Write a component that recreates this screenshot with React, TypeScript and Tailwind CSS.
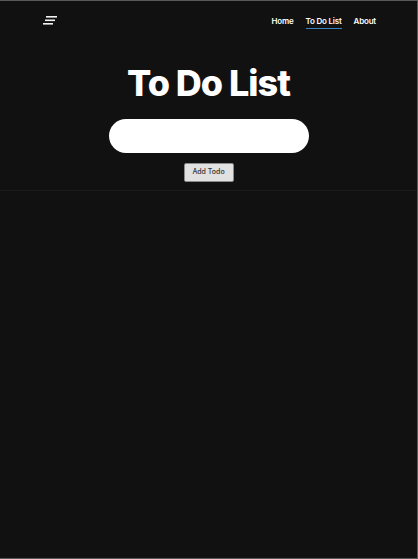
const App = () => {
  return (
    <div
      className="w-[418px] h-[559px] bg-[#111111] border-t border-r border-b border-[#5a5a5a] flex flex-col"
      style={{ fontFamily: "Inter, 'Noto Sans', sans-serif" }}
    >
      <header className="h-[190px] border-b border-[#1a1a1a] flex flex-col">
        <nav className="flex items-center justify-between pl-[43px] pr-[41px] pt-[14px] h-[25px]">
          <svg width="14" height="9" viewBox="0 0 14 9">
            <rect x="3" y="0" width="11" height="1.6" fill="#f2f2f2" />
            <rect x="2" y="3.5" width="10" height="1.6" fill="#f2f2f2" />
            <rect x="0" y="7" width="10" height="1.6" fill="#f2f2f2" />
          </svg>
          <ul className="flex items-center gap-[12px] text-[8px] font-semibold text-white tracking-[-0.2px]">
            <li>Home</li>
            <li className="relative">
              To Do List
              <span className="absolute left-0 right-0 -bottom-[2px] h-px bg-[#3b82c4]" />
            </li>
            <li>About</li>
          </ul>
        </nav>
        <h1 className="text-center text-white font-extrabold text-[36px] leading-none tracking-[-1px] mt-[39px]">
          To Do List
        </h1>
        <div className="flex justify-center mt-[18px]">
          <input className="w-[200px] h-[34px] rounded-full bg-white outline-none" />
        </div>
        <div className="flex justify-center mt-[10px]">
          <button className="w-[50px] h-[19px] bg-[#e1e1e1] border border-[#8a8a8a] rounded-[2px] text-[7px] text-[#333] font-medium">
            Add Todo
          </button>
        </div>
      </header>
      <main className="flex-1" />
    </div>
  );
};

export default App;
